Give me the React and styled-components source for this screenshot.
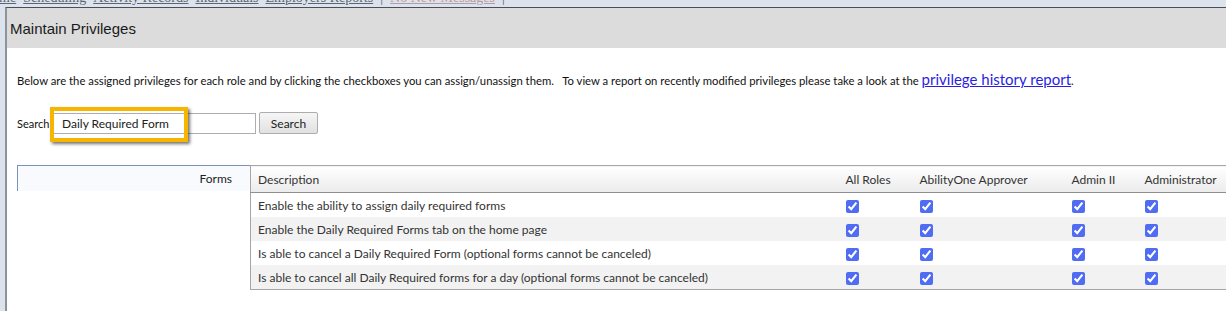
import React from "react";
import styled, { createGlobalStyle } from "styled-components";

const GlobalStyle = createGlobalStyle`
    html, body {
        margin: 0;
        padding: 0;
        background: #dde3ec;
        overflow: hidden;
    }
    body {
        font-family: Lato, "Liberation Sans", sans-serif;
        color: #222;
    }
`;

const Page = styled.div`
    width: 1226px;
    height: 311px;
    overflow: hidden;
    background: #dde3ec;
`;

const TopNav = styled.nav`
    height: 7px;
    display: flex;
    align-items: flex-end;
    gap: 7px;
    overflow: hidden;
    margin-left: -18px;
    font-family: "Liberation Serif", serif;
    font-size: 14px;
    line-height: 18px;
    color: #5c6672;
    white-space: nowrap;
`;

const NavLink = styled.span`
    text-decoration: underline;
    color: ${(p) => (p.$muted ? "#b79aa2" : "#5c6672")};
`;

const Dialog = styled.section`
    margin-left: 5px;
    width: 1400px;
    height: 320px;
    background: #fff;
    border-top: 1px solid #4a4f57;
    border-left: 2px solid #8d939b;
    box-sizing: border-box;
`;

const DialogHeader = styled.header`
    height: 40px;
    background: #dcdcdc;
    display: flex;
    align-items: center;
    padding-left: 3px;
    font-family: "Liberation Sans", Arial, sans-serif;
    font-size: 15px;
    color: #1a1a1a;
`;

const DialogBody = styled.div`
    padding: 22px 0 0 10px;
`;

const Intro = styled.p`
    margin: 0;
    font-size: 11.3px;
    line-height: 18px;
    color: #111;
    white-space: pre;
`;

const HistoryLink = styled.a`
    font-size: 15px;
    color: #2b1ee0;
    text-decoration: underline;
`;

const SearchRow = styled.div`
    margin-top: 22px;
    display: flex;
    align-items: center;
    height: 22px;
`;

const SearchLabel = styled.label`
    font-size: 11px;
    color: #111;
    width: 35px;
`;

const FieldWrap = styled.div`
    position: relative;
    display: flex;
`;

const SearchInput = styled.input`
    width: 204px;
    height: 21px;
    box-sizing: border-box;
    border: 1px solid #abadb3;
    padding: 0 0 0 9px;
    font-family: Lato, sans-serif;
    font-size: 12px;
    color: #222;
    outline: none;
`;

const Highlight = styled.span`
    position: absolute;
    left: -2px;
    top: -6px;
    width: 138px;
    height: 35px;
    box-sizing: border-box;
    border: 4px solid #f7b500;
    box-shadow: 2px 2px 3px rgba(0, 0, 0, 0.55);
    pointer-events: none;
`;

const SearchButton = styled.button`
    margin-left: 3px;
    width: 59px;
    height: 22px;
    border: 1px solid #adadad;
    border-radius: 2px;
    background: linear-gradient(#f6f6f6, #e1e1e1);
    font-family: Lato, sans-serif;
    font-size: 12px;
    color: #222;
    padding: 0;
`;

const TableArea = styled.div`
    margin-top: 31px;
    display: flex;
    align-items: flex-start;
`;

const GroupCell = styled.div`
    width: 233px;
    height: 26px;
    box-sizing: border-box;
    border-top: 1px solid #7b93bb;
    border-left: 1px solid #7b93bb;
    background: #f8fafd;
    display: flex;
    align-items: center;
    justify-content: flex-end;
    padding-right: 18px;
    font-size: 12px;
    color: #222;
`;

const Grid = styled.table`
    border-collapse: collapse;
    table-layout: fixed;
    width: 1100px;
    border-top: 1px solid #a6a6a6;
    border-bottom: 1px solid #a6a6a6;
    border-left: 1px solid #a6a6a6;
    font-size: 12px;
    color: #333;
`;

const HeadCell = styled.th`
    height: 26px;
    padding: 0 0 0 7px;
    text-align: left;
    font-weight: normal;
    white-space: nowrap;
    background: linear-gradient(#ffffff, #ebebeb);
    border-bottom: 1px solid #8f8f8f;
    color: #333;
`;

const Row = styled.tr`
    background: ${(p) => (p.$alt ? "#f2f2f2" : "#ffffff")};
`;

const Cell = styled.td`
    height: 24px;
    padding: 0 0 0 7px;
    white-space: nowrap;
    vertical-align: middle;
`;

const Check = styled.input`
    margin: 0;
    width: 13px;
    height: 13px;
    accent-color: #4f6cf2;
    vertical-align: middle;
`;

const columns = [
    { label: "Description", width: 588 },
    { label: "All Roles", width: 74 },
    { label: "AbilityOne Approver", width: 152 },
    { label: "Admin II", width: 73 },
    { label: "Administrator", width: 120 },
    { label: "", width: 93 },
];

const privileges = [
    "Enable the ability to assign daily required forms",
    "Enable the Daily Required Forms tab on the home page",
    "Is able to cancel a Daily Required Form (optional forms cannot be canceled)",
    "Is able to cancel all Daily Required forms for a day (optional forms cannot be canceled)",
];

const navItems = ["Home", "Scheduling", "Activity Records", "Individuals", "Employers Reports"];

export default function App() {
    return (
        <Page>
            <GlobalStyle />
            <TopNav>
                {navItems.map((item) => (
                    <NavLink key={item}>{item}</NavLink>
                ))}
                <span>|</span>
                <NavLink $muted>No New Messages</NavLink>
                <span>|</span>
            </TopNav>
            <Dialog>
                <DialogHeader>Maintain Privileges</DialogHeader>
                <DialogBody>
                    <Intro>
                        {"Below are the assigned privileges for each role and by clicking the checkboxes you can assign/unassign them.   To view a report on recently modified privileges please take a look at the "}
                        <HistoryLink href="#">privilege history report</HistoryLink>.
                    </Intro>
                    <SearchRow>
                        <SearchLabel>Search</SearchLabel>
                        <FieldWrap>
                            <SearchInput defaultValue="Daily Required Form" />
                            <Highlight />
                        </FieldWrap>
                        <SearchButton>Search</SearchButton>
                    </SearchRow>
                    <TableArea>
                        <GroupCell>Forms</GroupCell>
                        <Grid>
                            <colgroup>
                                {columns.map((c, i) => (
                                    <col key={i} style={{ width: c.width }} />
                                ))}
                            </colgroup>
                            <thead>
                                <tr>
                                    {columns.map((c, i) => (
                                        <HeadCell key={i}>{c.label}</HeadCell>
                                    ))}
                                </tr>
                            </thead>
                            <tbody>
                                {privileges.map((text, i) => (
                                    <Row key={text} $alt={i % 2 === 1}>
                                        <Cell>{text}</Cell>
                                        {[0, 1, 2, 3].map((k) => (
                                            <Cell key={k}>
                                                <Check type="checkbox" defaultChecked />
                                            </Cell>
                                        ))}
                                        <Cell />
                                    </Row>
                                ))}
                            </tbody>
                        </Grid>
                    </TableArea>
                </DialogBody>
            </Dialog>
        </Page>
    );
}
